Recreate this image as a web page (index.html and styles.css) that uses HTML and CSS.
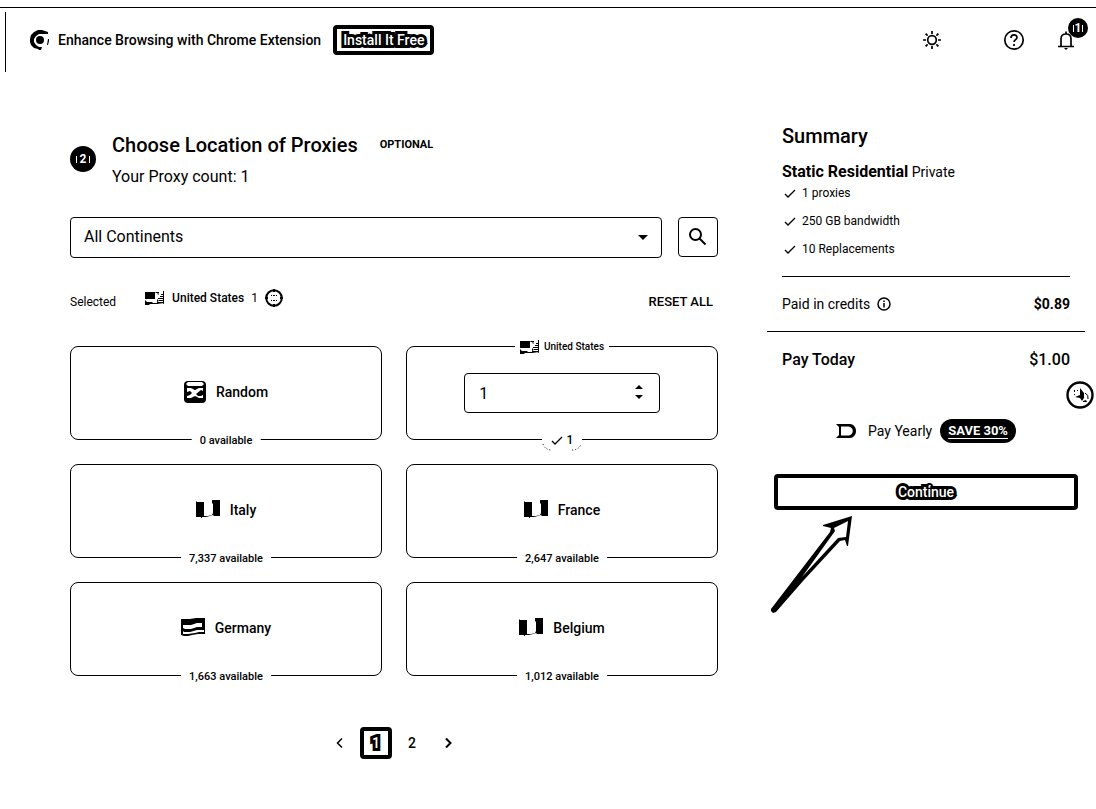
FILE: index.html
```html
<!DOCTYPE html>
<html lang="en">
<head>
<meta charset="utf-8">
<title>Choose Location of Proxies</title>
<link rel="stylesheet" href="styles.css">
</head>
<body>
<svg class="defs" width="0" height="0" aria-hidden="true">
  <symbol id="flag-us" viewBox="0 0 20 14"><path d="M0 1h10v7H0zM0 9l2 2h5l1 1h4l7-1v1l-7 1H5l-1 1H0zM10 1l9-1v1h-5v1h-3zM16 3h3v1h-3zM15 5h4v1h-4zM13 7h6v1h-6zM14 9h5v1h-5zM12 11h7v1h-7zM18 0h1v13h-1zM12 1l2 2-1 1zM12 8l2 2-2 1z"/></symbol>
  <symbol id="flag-v" viewBox="0 0 24 18"><path d="M0 1l1 1h7v14h4l4-1 1-2V4l-1-1V0h8v16h-6l-1-1-3 1-4 1H6v1H5v-1H0z"/></symbol>
  <symbol id="flag-h" viewBox="0 0 24 18"><path fill-rule="evenodd" d="M0 1h9l6-1h9v16h-7l-6 1-4 1H3l-3-1zM2 7v3l2 1h6l6-2h5V5h-5l-6 2zM2 13v3h5l7-1 4-1h5v-2h-7l-7 2H3z"/></symbol>
  <symbol id="check" viewBox="0 0 12 9"><path d="M1 5l3 3 7-7" fill="none" stroke="#000" stroke-width="1.3"/></symbol>
</svg>
<div class="page">
  <header class="topbar">
    <svg class="chrome" viewBox="0 0 20 20" aria-hidden="true"><path d="M18 4V2L15 1 12 0H8L4 2 1 5 0 9v3l1 3 3 3 4 1 1 1h2l1-3H9l-3-2-2-3V9l2-3 3-2z"/><circle cx="10" cy="10" r="4"/><path d="M18 9h1v2l-1 4h-1z"/></svg>
    <span class="promo">Enhance Browsing with Chrome Extension</span>
    <button class="install outlined">Install It Free</button>
    <nav class="tools" aria-label="Tools">
      <button class="tool tool-theme" aria-label="Theme"><svg viewBox="0 0 24 24"><circle cx="12" cy="12" r="4.3"/><path d="M12 3v3M12 18v3M3 12h3M18 12h3M5.600 5.600l2 2M16.400 16.400l2 2M5.600 18.400l2-2M16.400 7.600l2-2"/></svg></button>
      <button class="tool" aria-label="Help"><svg viewBox="0 0 24 24"><circle cx="12" cy="12" r="9.200"/><path d="M9 10c0-4 6-4 6-.5 0 2-3 2.300-3 4.500M12 16v2"/></svg></button>
      <button class="tool" aria-label="Notifications"><svg viewBox="0 0 24 24"><path d="M4 18.500h16M7 18v-7c0-3 2-5 5-5s5 2 5 5v7M12 3.500v2"/><path class="solid" d="M10 20h4l-2 2z"/></svg><span class="count ticks">1</span></button>
    </nav>
  </header>

  <main class="main">
    <section class="locations">
      <div class="step">
        <span class="step-number ticks">2</span>
        <div class="step-text">
          <div class="step-head"><h1>Choose Location of Proxies</h1><span class="optional">OPTIONAL</span></div>
          <p>Your Proxy count: 1</p>
        </div>
      </div>

      <div class="filter">
        <div class="select-wrap">
          <select aria-label="Continent"><option>All Continents</option></select>
          <svg class="caret" viewBox="0 0 10 5" aria-hidden="true"><path d="M0 0h10L5 5z"/></svg>
        </div>
        <button class="search" aria-label="Search"><svg viewBox="0 0 20 20"><circle cx="7.500" cy="7.500" r="5.500"/><path d="M11.500 11.500l6 6"/></svg></button>
      </div>

      <div class="selected">
        <span class="selected-label">Selected</span>
        <span class="chip"><svg class="flag-small"><use href="#flag-us"/></svg><span>United States</span><span class="chip-count">1</span>
          <button class="remove" aria-label="Remove"><svg viewBox="0 0 18 18"><circle cx="9" cy="9" r="7.800" fill="none" stroke="#000" stroke-width="2"/><path d="M8 0h2v3H8zM8 15h2v3H8zM0 8h3v2H0zM15 8h3v2h-3zM6 6h1v1H6zM11 6h1v1h-1zM6 11h1v1H6zM11 11h1v1h-1zM8 6h2v1H8zM8 11h2v1H8z"/></svg></button></span>
        <button class="reset">RESET ALL</button>
      </div>

      <div class="cards">
        <article class="card"><svg class="dice" viewBox="0 0 22 22"><rect width="22" height="22" rx="4"/><path fill="#fff" d="M4 1h14l2 2-2 2H4L2 3zM3 7h4l4 2 4-2h4v3l-2-1-5 4 2 2h3l2-1v3h-4l-4-2-4 2H3v-2l3-1 2-2-2-2-3 1z"/><path d="M8 6h6l-3 3z"/></svg><span>Random</span><span class="available">0 available</span></article>
        <article class="card card-active">
          <label class="card-title" for="us-count"><svg class="flag-small"><use href="#flag-us"/></svg>United States</label>
          <div class="stepper"><input id="us-count" type="number" value="1"><svg class="spin" viewBox="0 0 8 14" aria-hidden="true"><path d="M4 0l4 4H0zM4 14l4-4H0z"/></svg></div>
          <span class="picked"><svg class="arc" viewBox="0 0 40 22" aria-hidden="true"><path d="M1 14Q3 20 10 20M30 20Q37 20 39 14"/></svg><svg class="tick"><use href="#check"/></svg>1</span>
        </article>
        <article class="card"><svg class="flag"><use href="#flag-v"/></svg><span>Italy</span><span class="available">7,337 available</span></article>
        <article class="card"><svg class="flag"><use href="#flag-v"/></svg><span>France</span><span class="available">2,647 available</span></article>
        <article class="card"><svg class="flag"><use href="#flag-h"/></svg><span>Germany</span><span class="available">1,663 available</span></article>
        <article class="card"><svg class="flag"><use href="#flag-v"/></svg><span>Belgium</span><span class="available">1,012 available</span></article>
      </div>

      <nav class="pages" aria-label="Pages">
        <button aria-label="Previous"><svg viewBox="0 0 8 12"><path d="M6 1.500L1.500 6 6 10.500"/></svg></button>
        <button class="current outlined">1</button>
        <button>2</button>
        <button aria-label="Next"><svg class="next" viewBox="0 0 8 12"><path d="M2 1.500L6.500 6 2 10.500"/></svg></button>
      </nav>
    </section>

    <aside class="summary">
      <div class="plan">
        <h2>Summary</h2>
        <p class="plan-name"><strong>Static Residential</strong> Private</p>
        <ul>
          <li><svg class="tick"><use href="#check"/></svg>1 proxies</li>
          <li><svg class="tick"><use href="#check"/></svg>250 GB bandwidth</li>
          <li><svg class="tick"><use href="#check"/></svg>10 Replacements</li>
        </ul>
      </div>
      <div class="row credits"><span class="row-label">Paid in credits <svg class="info" viewBox="0 0 14 14"><circle cx="7" cy="7" r="6"/><path d="M7 6v4.500M7 3.500v1.500"/></svg></span><strong>$0.89</strong></div>
      <div class="row today"><span>Pay Today</span><span>$1.00</span></div>
      <label class="yearly">
        <span class="switch"><input type="checkbox"><svg viewBox="0 0 20 14" aria-hidden="true"><path fill-rule="evenodd" d="M0 0h14c8 1 8 13 0 14H0l3-3V3zM5 2.500v9h8c5-1 5-8 0-9z"/></svg></span>
        <span>Pay Yearly</span><span class="save">SAVE 30%</span>
      </label>
      <div class="action">
        <button class="continue outlined">Continue</button>
        <svg class="arrow" viewBox="0 0 84 98" aria-hidden="true"><path d="M82 0L53 9v1l8 2-1 4L1 93v2l2 2 3-1 27-31 37-40 5-1 2 6h1z"/><path fill="#fff" d="M64 12l14-7-2 16-8 1-36 39 33-46z"/></svg>
      </div>
      <button class="cookie" aria-label="Cookie settings"><svg viewBox="0 0 28 28"><circle cx="14" cy="14" r="12.500" fill="#fff" stroke="#000" stroke-width="2.400"/><path d="M14 7l4 5v5l-2 3-2-3-5-1 5-2zM8 9h1v2H8zM11 9h1v1h-1zM8 13h1v1H8zM17 20l3-1 1 2h-4z"/><path d="M19 12q4 2 3 6" fill="none" stroke="#000"/></svg></button>
    </aside>
  </main>
</div>
</body>
</html>
```

FILE: styles.css
```css
* { box-sizing: border-box; }
body {
  margin: 0;
  padding-top: 7px;
  background: #fff;
  color: #000;
  font: 400 14px/20px Roboto, sans-serif;
}
h1, h2, p, ul { margin: 0; padding: 0; }
button, input, select { font: inherit; color: inherit; background: none; border: 0; padding: 0; }
svg { display: block; flex: none; }
.defs { position: absolute; }
.page { border-top: 1px solid #000; }

.topbar {
  display: flex;
  align-items: center;
  height: 60px;
  margin: 4px 0 0 5px;
  padding: 0 10px 4px 24px;
  border-left: 1px solid #000;
}
.chrome { width: 20px; height: 20px; margin-right: 8px; }
.promo { font-weight: 500; margin-right: 12px; }
.outlined {
  border: 4px solid #000;
  border-radius: 4px;
  color: #fff;
  font-weight: 500;
  -webkit-text-stroke: 6px #000;
  paint-order: stroke fill;
}
.install { height: 30px; padding: 0 6px; line-height: 20px; }
.tools { display: flex; gap: 12px; margin-left: auto; }
.tool { position: relative; display: grid; place-items: center; width: 40px; height: 40px; }
.tool-theme { margin-right: 30px; }
.tool svg { width: 24px; height: 24px; fill: none; stroke: #000; stroke-width: 1.7; }
.tool .solid { fill: #000; stroke: none; }
.ticks {
  display: flex;
  align-items: center;
  justify-content: center;
  gap: 3px;
  border-radius: 50%;
  background: #000;
  color: #fff;
  font-size: 12px;
  font-weight: 700;
}
.ticks::before, .ticks::after { content: ""; width: 1px; height: 7px; background: #fff; }
.count {
  position: absolute;
  top: -2px;
  right: -2px;
  width: 20px;
  height: 20px;
  gap: 1px;
}

.main {
  display: grid;
  grid-template-columns: minmax(0, 1fr) 318px;
  column-gap: 49px;
  padding: 0 11px 48px 70px;
}
.locations { padding-top: 59px; }
.step { display: flex; align-items: center; gap: 16px; margin-bottom: 30px; }
.step-number { width: 26px; height: 26px; }
.step-head { display: flex; align-items: center; gap: 22px; margin-bottom: 8px; }
h1, h2 { font-size: 20px; line-height: 28px; font-weight: 500; }
.optional { font-size: 11px; font-weight: 700; }
.step-text p { font-size: 16px; }

.filter { display: flex; gap: 16px; margin-bottom: 30px; }
.select-wrap { position: relative; flex: 1; }
.select-wrap select {
  appearance: none;
  display: block;
  width: 100%;
  height: 41px;
  padding: 0 13px 2px;
  border: 1px solid #000;
  border-radius: 4px;
  font-size: 16px;
}
.caret { position: absolute; right: 14px; top: 18px; width: 10px; height: 5px; }
.search { display: grid; place-items: center; width: 40px; height: 40px; border: 1px solid #000; border-radius: 4px; }
.search svg { width: 20px; height: 20px; fill: none; stroke: #000; stroke-width: 2; }

.selected { display: flex; align-items: flex-end; height: 24px; margin-bottom: 34px; }
.selected-label { font-size: 12px; margin-right: 29px; }
.chip { display: flex; align-items: center; gap: 7px; height: 20px; align-self: flex-start; font-size: 12px; font-weight: 500; }
.chip-count { font-weight: 400; }
.remove svg { width: 18px; height: 18px; }
.flag-small { width: 20px; height: 14px; }
.reset { margin-left: auto; margin-right: 5px; font-weight: 500; font-size: 13px; }

.cards { display: grid; grid-template-columns: 1fr 1fr; gap: 24px; margin-bottom: 51px; }
.card {
  position: relative;
  display: flex;
  align-items: center;
  justify-content: center;
  gap: 10px;
  height: 94px;
  padding-bottom: 2px;
  border: 1px solid #000;
  border-radius: 8px;
  font-weight: 500;
}
.card-active { padding-bottom: 0; }
.flag { width: 24px; height: 18px; margin-bottom: 2px; }
.dice { width: 22px; height: 22px; }
.available, .card-title, .picked {
  position: absolute;
  left: 50%;
  transform: translateX(-50%);
  background: #fff;
  white-space: nowrap;
}
.available { bottom: -12px; padding: 0 8px; font-size: 11px; }
.card-title { top: -10px; display: flex; align-items: center; gap: 4px; padding: 0 5px; font-size: 10px; }
.picked { bottom: -11px; display: flex; align-items: center; justify-content: center; gap: 4px; width: 40px; font-size: 12px; }
.arc { position: absolute; left: 0; top: 0; width: 40px; height: 22px; fill: none; stroke: #000; stroke-dasharray: 1 2; }
.tick { width: 12px; height: 9px; }
.stepper { position: relative; width: 63%; }
.stepper input {
  appearance: textfield;
  display: block;
  width: 100%;
  height: 40px;
  padding: 0 14px;
  border: 1px solid #000;
  border-radius: 4px;
  font-weight: 400;
  font-size: 16px;
}
.stepper input::-webkit-inner-spin-button { appearance: none; }
.spin { position: absolute; right: 17px; top: 12px; width: 8px; height: 14px; }

.pages { display: flex; justify-content: center; gap: 4px; }
.pages button { display: grid; place-items: center; width: 32px; height: 32px; font-weight: 500; }
.pages svg { width: 8px; height: 12px; fill: none; stroke: #000; stroke-width: 1.5; }
.pages .next { stroke-width: 2; }

.summary { position: relative; padding-top: 50px; }
.plan { margin: 0 15px; padding-bottom: 13px; border-bottom: 1px solid #000; }
.plan h2 { margin-bottom: 14px; }
.plan-name { line-height: 16px; }
.plan-name strong { font-size: 16px; font-weight: 700; }
.plan ul { margin-top: -1px; list-style: none; font-size: 12px; line-height: 28px; }
.plan li { display: flex; align-items: center; gap: 6px; padding-left: 2px; }
.row { display: flex; align-items: center; justify-content: space-between; padding: 0 15px; }
.row-label { display: flex; align-items: center; gap: 7px; }
.credits { height: 55px; border-bottom: 1px solid #000; }
.credits strong { font-weight: 700; }
.info { width: 14px; height: 14px; fill: none; stroke: #000; stroke-width: 1.5; }
.today { height: 56px; font-size: 16px; font-weight: 500; }
.yearly { display: flex; align-items: center; justify-content: center; margin: 31px 0; height: 24px; }
.switch { position: relative; margin-right: 12px; }
.switch input { position: absolute; inset: 0; margin: 0; opacity: 0; }
.switch svg { width: 20px; height: 14px; }
.save {
  margin-left: 8px;
  padding: 0 8px;
  border-radius: 12px;
  background: #000;
  color: #fff;
  font-size: 13px;
  font-weight: 700;
  line-height: 24px;
  text-decoration: underline;
  text-underline-offset: 3px;
}
.action { position: relative; padding: 0 7px; }
.continue { display: block; width: 100%; height: 36px; }
.arrow { position: absolute; left: 3px; top: 42px; width: 84px; height: 98px; }
.cookie { position: absolute; top: 309px; right: -9px; width: 28px; height: 28px; }
```
